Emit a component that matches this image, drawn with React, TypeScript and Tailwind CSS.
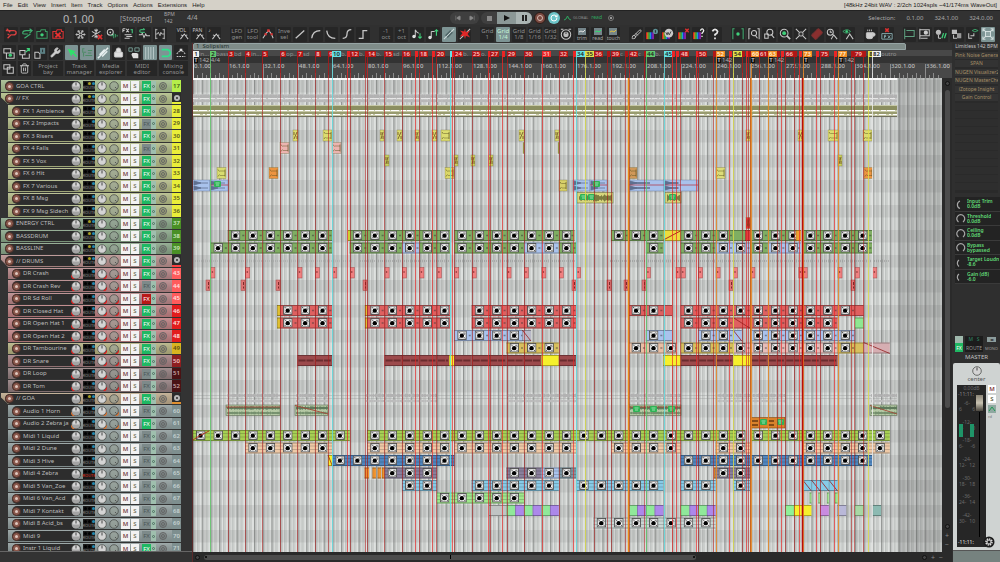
import React from "react";
import { Snowflake, Wrench, Lock, Trash2, Coffee, Bandage, Brush, SkipBack, SkipForward, RotateCw } from "lucide-react";

const U = 17.42;
const X0 = 193;
const ux = (u: number) => X0 + u * U;
const rowY = (r: number) => 80 + r * 12.5;

/* ---------- toolbar glyphs ---------- */
const stroke = { fill: "none", stroke: "currentColor", strokeWidth: 1.2 } as const;
const G = ({ children, c = "text-[#c6c6c6]" }: { children: React.ReactNode; c?: string }) => (
  <svg viewBox="0 0 14 14" className={`h-[12px] w-[12px] ${c}`}>{children}</svg>
);
const Txt = ({ a, b, on }: { a: string; b: string; on?: boolean }) => (
  <span className={`flex flex-col text-[6px] leading-[6px] ${on ? "text-[#c4f4d8]" : "text-[#8e8e8e]"}`}>
    <span>{a}</span><span>{b}</span>
  </span>
);
const LI = "h-[11px] w-[11px] text-[#c6c6c6]";
const Env = ({ label }: { label: string }) => (
  <span className="relative flex h-full w-full items-center justify-end">
    <span className="absolute left-px top-px text-[5px] leading-[5px] text-[#c8c8c8]">{label}</span>
    <G><path d="M4 13l4.500-6L13 13M7 9l-2.500-1M9.500 9L12 8" {...stroke} /></G>
  </span>
);
const Folder = ({ del }: { del?: boolean }) => (
  <G c={del ? "text-[#d33]" : "text-[#3c9a62]"}>
    <path d="M1 4h4l1-2h5v2h2v8H1z" {...stroke} />
    {del ? <path d="M4 5.500l6 5.500M10 5.500L4 11" stroke="#f03030" strokeWidth="2" /> : <circle cx="7" cy="8" r="2" fill="#3fd07a" />}
  </G>
);
const Rainbow = ({ x }: { x?: string }) => (
  <G>
    {["#e02020", "#e0a020", "#30c040", "#20a0d0", "#3030e0", "#b020d0"].map((c, i) => (
      <rect key={c} x={i * 1.5} y="5" width="1.5" height="8" fill={c} />
    ))}
    {!x && <><circle cx="11" cy="4" r="3" fill="#5c8f94" /><path d="M11 2.500v3" stroke="#222" /></>}
    {x === "x" && <path d="M8.500 1l4 4M12.500 1l-4 4" stroke="#e03030" strokeWidth="1.6" />}
    {x === "?" && <path d="M8.500 3q2.500-4 4 0q0 1.500-2 3v1M10.500 9v1.500" stroke="#f0f0f0" strokeWidth="1.500" fill="none" />}
    {x === "w" && <><circle cx="8" cy="6" r="5" fill="#c8c8c8" /><path d="M4.500 5l1.500 3 1-3 1.500 3 2-4" stroke="#333" fill="none" /></>}
  </G>
);
const Box = ({ label, c }: { label: string; c: string }) => (
  <span className="flex h-full w-full flex-col items-center text-[5px] leading-[5px] text-[#a8a8a8]">
    <svg viewBox="0 0 10 9" className="h-[9px] w-[10px]">
      <rect x="1" y="1" width="8" height="7" fill="#75858a" />
      <path d="M2 5l2-1 2 1 2-2" fill="none" stroke={c} />
    </svg>
    {label}
  </span>
);

type Btn = { n: string; on?: boolean; start?: boolean; g: React.ReactNode };
const TOP: Btn[] = [
  { n: "Undo", g: <G c="text-[#d84040]"><path d="M1 3h9q3 0 3 2.500T10 8H7L3 12M6 5L2 1M5 8l-2-1" {...stroke} strokeWidth="1.600" /></G> },
  { n: "Redo", g: <G c="text-[#3fae70]"><path d="M13 3H6Q2 3 2 6q0 1 2 1h4M10 1l3 2-3 3M4 12l7-5" {...stroke} strokeWidth="1.400" /></G> },
  { n: "Save snapshot", g: <Folder /> },
  { n: "Delete snapshot", g: <Folder del /> },
  { n: "Freeze", start: true, g: <Snowflake className={LI} /> },
  { n: "Unfreeze", g: <G><path d="M6 1v11M1 4l10 6M1 10l10-6M4 2l2 2 2-2M4 11l2-2 2 2" {...stroke} /><path d="M8 8l5 5M13 8l-5 5" stroke="#e03030" strokeWidth="1.800" /></G> },
  { n: "Audio settings", g: <G><circle cx="5" cy="5" r="3.500" {...stroke} /><circle cx="5" cy="5" r="1" fill="#ccc" /><path d="M5 9h4M9 6v6M11 7v4M13 8v2" stroke="#3fae70" /></G> },
  { n: "FX chain", g: <G><path d="M1 1v4M1 1h3M1 3h2M5 1l3 4M8 1L5 5M3 8h8M5 10h7M3 12h6" {...stroke} /><path d="M10 2h2v4" stroke="#3fae70" fill="none" strokeWidth="1.500" /></G> },
  { n: "Envelope tool", g: <G><path d="M1 8h3l1-2 2 5 2-4 1 2h4" {...stroke} /><path d="M8 5H4q-2 0-2-1.500T4 2h3M6 0.500L8 2" stroke="#3fae70" fill="none" strokeWidth="1.400" /></G> },
  { n: "Grid wave", g: <G><path d="M2 1v12M12 1v12M2 2h2M10 2h2M2 12h2M10 12h2M2 7h2l1-2 2 4 1-4 1 2h3" {...stroke} strokeWidth="1" /></G> },
  { n: "Volume envelope", start: true, g: <Env label="VOL" /> },
  { n: "Pan envelope", g: <Env label="PAN" /> },
  { n: "Pitch envelope", g: <Env label="♪" /> },
  { n: "LFO generator", start: true, g: <Txt a="LFO" b="gen" /> },
  { n: "LFO tool", g: <Txt a="LFO" b="tool" /> },
  { n: "Peak", g: <G><path d="M1 12l4-6 3-3 3 4 2 5" {...stroke} /><rect x="6" y="1.500" width="3" height="3" fill="#d33" /><rect x="3" y="6" width="2.500" height="2.500" fill="#d33" /><rect x="10" y="6" width="2.500" height="2.500" fill="#d33" /></G> },
  { n: "Invert selection", g: <Txt a="Inve" b="sel" /> },
  { n: "Linear", g: <G><path d="M2 12L12 3" {...stroke} strokeWidth="1.500" /></G> },
  { n: "Slow start", g: <G><path d="M2 12q1-9 10-9" {...stroke} strokeWidth="1.500" /></G> },
  { n: "Fast end", g: <G><path d="M2 3q1 9 10 9" {...stroke} strokeWidth="1.500" /></G> },
  { n: "S-curve", g: <G><path d="M2 12q5 0 5-5t5-5" {...stroke} strokeWidth="1.500" /></G> },
  { n: "Square", g: <G><path d="M2 12h5V3h5" {...stroke} strokeWidth="1.500" /></G> },
  { n: "Octave down", start: true, g: <Txt a="-1" b="oct" /> },
  { n: "Octave up", g: <Txt a="+1" b="oct" /> },
  { n: "Semitone down", g: <G><path d="M5 2v8M5 2q1 3 4 4" {...stroke} /><circle cx="3.500" cy="10" r="2" fill="#ddd" /><path d="M10.500 6v6M8.500 10l2 2 2-2" stroke="#3fd07a" fill="none" strokeWidth="1.300" /></G> },
  { n: "Semitone up", g: <G><path d="M5 4v7M5 4h4" {...stroke} /><circle cx="3.500" cy="11" r="2" fill="#ddd" /><path d="M11 9V2M9 4l2-2 2 2" stroke="#3fd07a" fill="none" strokeWidth="1.300" /></G> },
  { n: "Link", on: true, g: <G c="text-[#cfdada]"><path d="M1 13L13 1" {...stroke} /><path d="M3 9l6-6M5 11l6-6" {...stroke} stroke="#4c6264" strokeWidth="1.500" /></G> },
  { n: "Unlink", g: <G><path d="M1 13L13 1" {...stroke} /><path d="M7 1l1 4 5-2-3 4 3 4-5-2-1 4-1-4-5 1 3-4-3-3 5 1z" fill="#e02828" /></G> },
  { n: "Grid 1", start: true, g: <Txt a="Grid" b="1" /> },
  { n: "Grid 1/4", on: true, g: <Txt a="Grid" b="1/4" on /> },
  { n: "Grid 1/8", g: <Txt a="Grid" b="1/8" /> },
  { n: "Grid 1/16", g: <Txt a="Grid" b="1/16" /> },
  { n: "Grid 1/32", g: <Txt a="Grid" b="1/32" /> },
  { n: "Automation knob", g: <G><circle cx="7" cy="7.500" r="5.500" {...stroke} /><circle cx="7" cy="7.500" r="3" fill="#bbb" /><path d="M7 5v2" stroke="#222" /><path d="M1 1.500h3M10 1.500h3" {...stroke} /></G> },
  { n: "Trim", g: <Box label="trim" c="#e0e0e0" /> },
  { n: "Read", g: <Box label="read" c="#30e070" /> },
  { n: "Touch", g: <Box label="touch" c="#e0c040" /> },
  { n: "Paint", start: true, g: <Brush className={LI} /> },
  { n: "Colour by name", g: <Rainbow /> },
  { n: "Colour by wave", g: <Rainbow x="w" /> },
  { n: "Clear colours", g: <Rainbow x="x" /> },
  { n: "Random colours", g: <Rainbow x="?" /> },
  { n: "Help", g: <G c="text-[#e6e6e6]"><path d="M4 4q1-2.500 3-2.500T10 4q0 2-3 3.500V9M7 11v2" {...stroke} strokeWidth="2" /></G> },
  { n: "Zoom selection", start: true, g: <G c="text-[#3fae70]"><path d="M3 1H1v12M11 1h2v12" {...stroke} /><circle cx="7" cy="7" r="2" fill="#3fd07a" /></G> },
  { n: "Zoom time", g: <G><path d="M3 1H1v12M11 1h2v12M8.500 8.500L11 12" {...stroke} /><circle cx="7" cy="6" r="3" {...stroke} /></G> },
  { n: "Zoom items", g: <G><path d="M2 7h4v5H2zM9.500 7.500l3.500 4" {...stroke} /><circle cx="8" cy="5" r="3.500" {...stroke} /></G> },
  { n: "Zoom in", g: <G><circle cx="6" cy="6" r="4.500" {...stroke} /><circle cx="6" cy="6" r="2.200" fill="#3fd07a" /><path d="M9 9l4 4" {...stroke} strokeWidth="2" /></G> },
  { n: "Zoom out full", g: <G><path d="M1 1l12 12M13 1L1 13" {...stroke} /><circle cx="7" cy="7" r="2.500" fill="#333" stroke="#ccc" /></G> },
  { n: "Repair", g: <Bandage className="h-[12px] w-[12px] -rotate-45 text-[#7a3030]" fill="#8a2f2f" /> },
  { n: "Time view", g: <G><circle cx="5" cy="5" r="3.500" {...stroke} /><path d="M5 3v2h2M6 13l3-5 4 5" {...stroke} /></G> },
  { n: "Show envelopes", g: <G><path d="M1 4q5-4 9 0q-5 4-9 0z" stroke="#3fae70" fill="none" /><circle cx="5.500" cy="4" r="1.500" fill="#3fd07a" /><path d="M5 13l4-6 4 6" {...stroke} /></G> },
  { n: "Break", start: true, g: <Coffee className={LI} fill="#d0d0d0" /> },
  { n: "Bypass FX", g: <G><path d="M5 0.500l4 4M9 0.500l-4 4" stroke="#e03030" strokeWidth="1.800" /><path d="M1 6.500h12V13H1zM4 12V8.500h2M4 10h2M8 8.500l3 3.500M11 8.500L8 12" stroke="#8fb4b8" fill="none" /></G> },
  { n: "Dock", start: true, g: <G><path d="M2 1v12M4 3h9v7H2" {...stroke} stroke="#5fa080" /><path d="M4 5h8" stroke="#333" /></G> },
  { n: "Docked media", g: <G><path d="M1 1v12M1 2h11v7H1M2 12h8" {...stroke} /><circle cx="8" cy="5.500" r="2.500" fill="#ccc" /></G> },
  { n: "Plug-in on", g: <G><circle cx="4" cy="5" r="3" fill="#bbb" /><path d="M4 8v4M4 12h3" {...stroke} /><path d="M8 12l2-6M11 12l2-6" stroke="#3fd07a" strokeWidth="1.500" /></G> },
  { n: "Plug-in link", g: <G><rect x="1" y="2" width="6" height="5" fill="#bbb" /><rect x="7" y="6" width="5" height="6" fill="#999" /><path d="M3 8v4h4" {...stroke} /></G> },
  { n: "Routing view", g: <G><path d="M2 6v6h4M4 9h4V6" {...stroke} /><path d="M6 3q3-3 7 0q-4 3-7 0z" stroke="#3fae70" fill="none" /></G> },
  { n: "Full screen", on: true, g: <G c="text-[#cfdada]"><path d="M1 1l12 12M13 1L1 13M1 4V1h3M10 1h3v3M13 10v3h-3M4 13H1v-3" {...stroke} /><rect x="4" y="4" width="6" height="6" fill="#8fa4a4" stroke="#dfe8e8" /></G> },
];

const LEFT: Btn[] = [
  { n: "New from template", g: <G><path d="M1 2h8v5H1zM4 7v6h9V7H9" {...stroke} /><circle cx="8.500" cy="9.500" r="2" fill="#3fd07a" /></G> },
  { n: "Save template", g: <G><path d="M1 4h6v5H1zM4 9v4h8V8" {...stroke} /><path d="M8 6l4-4M9 2h3v3" stroke="#3fd07a" fill="none" strokeWidth="1.500" /></G> },
  { n: "Tabs", g: <G><path d="M1 6h4l2 2v5H1z" {...stroke} /><rect x="7" y="1" width="6" height="7" fill="#5c8084" /><path d="M10 3v3" stroke="#222" /></G> },
  { n: "Tools", g: <Wrench className={LI} fill="#d0d0d0" /> },
  { n: "Pointer", on: true, g: <G><path d="M2 2l4 9 1.500-3 4.500 4 1-1.500-4-4 2.500-1.500z" fill="#2fe06a" /></G> },
  { n: "Ripple edit", on: true, g: <G c="text-[#4d8a66]"><path d="M4 2H2v4h4M8 4h5M5 10h8M3 7v4M8 7h4" {...stroke} /></G> },
  { n: "Crossfade", on: true, g: <G c="text-[#e8f0f0]"><path d="M1 13L13 1M3 9l6-6M6 11l6-6" {...stroke} strokeWidth="1.700" /></G> },
  { n: "Lock", g: <Lock className={LI} fill="#e0e0e0" /> },
  { n: "Item grouping", g: <G><path d="M1 1h4v4H1zM8 1h5v4H8z" stroke="#7fa8a0" fill="none" /><path d="M5 7h5l2 1v5H6L4 9z" fill="#ddd" /></G> },
  { n: "Grid lines", on: true, g: <G c="text-[#b9c9c9]"><path d="M2 0v14M5 0v14M8 0v14M11 0v14" {...stroke} /></G> },
  { n: "Snap", on: true, g: <G c="text-[#2fe08a]"><path d="M2 3h6a4 4 0 010 8H2" {...stroke} strokeWidth="2" /></G> },
  { n: "Show points", g: <G><path d="M2 8l5-5 5 5M2 11h10" {...stroke} strokeDasharray="2 1" /><rect x="5.500" y="2" width="3" height="3" fill="#ddd" /></G> },
];

const ToolButton = ({ b }: { b: Btn }) => (
  <button
    aria-label={b.n}
    className={`flex h-[15px] min-w-0 flex-1 items-center justify-center overflow-hidden rounded-[1px] ${b.on ? "bg-[#7d9494]" : "bg-[#262626]"} ${b.start ? "ml-[7px]" : ""}`}
  >
    {b.g}
  </button>
);

/* ---------- tracks ---------- */
type Track = { n: string; num: string; bg: string; nc: string; top?: boolean; folder?: boolean; fx?: string; tick?: string };
const GRN = "bg-[#1fb863] text-white", OFF = "bg-[#7d8a8a] text-[#4a5555]", RED = "bg-[#b81818] text-white";
const YB = "bg-[#b0b884]", YN = "bg-[#e9ee3a] text-[#55551a]", DB = "bg-[#b38385]", AB = "bg-[#8d9a9a]", AN = "bg-[#7e8f8f] text-[#c5d2d2]";
const FOLD = "bg-[#2b2b2b] border-b-2";
const TRACKS: Track[] = [
  { n: "GOA CTRL", num: "17", bg: "bg-[#a1b889]", nc: "bg-[#b5ee4a] text-[#3c5a14]", top: true, fx: GRN },
  { n: "// FX", num: "", bg: "bg-[#aebb84]", nc: `${FOLD} border-[#e9ee3a]`, top: true, folder: true, fx: GRN },
  { n: "FX 1 Ambience", num: "28", bg: YB, nc: YN, fx: GRN },
  { n: "FX 2 Impacts", num: "29", bg: YB, nc: YN },
  { n: "FX 3 Risers", num: "30", bg: YB, nc: YN, fx: GRN },
  { n: "FX 4 Falls", num: "31", bg: YB, nc: YN },
  { n: "FX 5 Vox", num: "32", bg: YB, nc: YN, fx: GRN },
  { n: "FX 6 Hit", num: "33", bg: YB, nc: YN, fx: GRN },
  { n: "FX 7 Various", num: "34", bg: YB, nc: YN, fx: GRN },
  { n: "FX 8 Msg", num: "35", bg: YB, nc: YN, fx: GRN },
  { n: "FX 9 Msg Sidech", num: "36", bg: YB, nc: YN, fx: GRN },
  { n: "ENERGY CTRL", num: "37", bg: "bg-[#86a285]", nc: "bg-[#4a9026] text-[#cfe8c0]", top: true, fx: GRN },
  { n: "BASSDRUM", num: "38", bg: "bg-[#86a285]", nc: "bg-[#4a9026] text-[#cfe8c0]", top: true, fx: GRN },
  { n: "BASSLINE", num: "39", bg: "bg-[#86a285]", nc: "bg-[#4a9026] text-[#cfe8c0]", top: true, fx: GRN },
  { n: "// DRUMS", num: "", bg: "bg-[#b48c8a]", nc: `${FOLD} border-[#ff4040]`, top: true, folder: true, fx: GRN },
  { n: "DR Crash", num: "43", bg: DB, nc: "bg-[#ff5c5c] text-[#ffe0e0]", fx: GRN, tick: "#e02020" },
  { n: "DR Crash Rev", num: "44", bg: DB, nc: "bg-[#ff5c5c] text-[#ffe0e0]", tick: "#e02020" },
  { n: "DR Sd Roll", num: "45", bg: DB, nc: "bg-[#ff5c5c] text-[#ffe0e0]", fx: RED, tick: "#e02020" },
  { n: "DR Closed Hat", num: "46", bg: "bg-[#ba7d7f]", nc: "bg-[#e21d1d] text-[#ffe0e0]", fx: GRN, tick: "#e02020" },
  { n: "DR Open Hat 1", num: "47", bg: "bg-[#ba7d7f]", nc: "bg-[#e21d1d] text-[#ffe0e0]", fx: GRN, tick: "#e02020" },
  { n: "DR Open Hat 2", num: "48", bg: "bg-[#ba7d7f]", nc: "bg-[#e21d1d] text-[#ffe0e0]", fx: GRN, tick: "#e02020" },
  { n: "DR Tambourine", num: "49", bg: "bg-[#b1ae7e]", nc: "bg-[#d9b420] text-[#5a4a10]", fx: GRN, tick: "#e02020" },
  { n: "DR Snare", num: "50", bg: "bg-[#a07c7e]", nc: "bg-[#8e1e20] text-[#f0c8c8]", fx: GRN, tick: "#e02020" },
  { n: "DR Loop", num: "51", bg: "bg-[#8f7a7b]", nc: "bg-[#4a1214] text-[#c8a8a8]", tick: "#e02020" },
  { n: "DR Tom", num: "52", bg: "bg-[#8f7a7b]", nc: "bg-[#4a1214] text-[#c8a8a8]", tick: "#e02020" },
  { n: "// GOA", num: "", bg: "bg-[#baa688]", nc: `${FOLD} border-[#e09030]`, top: true, folder: true, fx: GRN },
  { n: "Audio 1 Horn", num: "60", bg: AB, nc: AN, tick: "#d87030" },
  { n: "Audio 2 Zebra ja", num: "61", bg: AB, nc: AN, fx: GRN, tick: "#d87030" },
  { n: "Midi 1 Liquid", num: "62", bg: AB, nc: AN },
  { n: "Midi 2 Dune", num: "63", bg: AB, nc: AN },
  { n: "Midi 3 Hive", num: "64", bg: AB, nc: AN },
  { n: "Midi 4 Zebra", num: "65", bg: AB, nc: AN },
  { n: "Midi 5 Van_Zoe", num: "66", bg: AB, nc: AN },
  { n: "Midi 6 Van_Acd", num: "67", bg: AB, nc: AN },
  { n: "Midi 7 Kontakt", num: "68", bg: AB, nc: AN },
  { n: "Midi 8 Acid_bs", num: "69", bg: AB, nc: AN },
  { n: "Midi 9", num: "70", bg: AB, nc: AN },
  { n: "Instr 1 Liquid", num: "71", bg: AB, nc: AN, fx: GRN },
];

const Knob = ({ light, tick, dim }: { light?: boolean; tick?: string; dim?: boolean }) => (
  <svg viewBox="0 0 10 10" className="h-[10px] w-[10px] shrink-0">
    {tick && <path d={light ? "M0.500 6q0 3 3 4" : "M9.500 6q0 3-3 4"} fill="none" stroke={tick} strokeWidth="1.500" />}
    <circle cx="5" cy="5" r="4.300" fill={dim ? "#9aa39a" : "#d4d4d4"} fillOpacity={dim ? 0.6 : 1} stroke="#4b4f4b" strokeWidth="0.800" />
    {light && <path d="M1 5.500a4 4 0 008 0z" fill="#a4a4a4" />}
    {dim ? <path d="M6 6l1.500 1.500" stroke="#555" /> : <path d="M5 1.500v3" stroke="#444" />}
  </svg>
);

const TrackRow = ({ t }: { t: Track }) => (
  <li className="flex h-[12px] odd:h-[13px]">
    <div className={`mb-px flex min-w-0 flex-1 items-center bg-linear-to-b from-white/15 to-black/10 ${t.bg} ${t.top ? "ml-px" : "ml-[8px]"} ${t.folder ? "[clip-path:polygon(0_0,100%_0,100%_100%,7px_100%,0_40%)]" : ""}`}>
      <div className="ml-[4px] flex h-[10px] min-w-0 flex-1 items-center rounded-l-full rounded-r-full bg-[#2d2d2d]">
        <button aria-label={`Arm ${t.n}`} className="h-[9px] w-[9px] shrink-0 rounded-full border border-[#4a2f28] bg-[#8a584c] p-[2px]">
          <span className="block h-[3px] w-[3px] rounded-full bg-[#e0c8c0]" />
        </button>
        <span className="ml-[2px] min-w-0 flex-1 overflow-hidden whitespace-nowrap text-[6px] leading-[9px] text-[#bcbcbc]">{t.n}</span>
        <Knob light tick={t.tick} />
      </div>
      <button className="ml-[2px] flex h-[10px] w-[12px] flex-col items-center justify-between bg-[#1b1b1b] py-px text-[4px] leading-[4px] text-[#8a8a8a]">
        <span className="flex gap-px">
          <i className="h-[3px] w-[3px] rounded-full bg-black" />
          <i className={`h-[3px] w-[3px] rounded-full ${t.top ? "bg-[#a8a020]" : "bg-black"}`} />
          <i className="h-[3px] w-[3px] rounded-full bg-[#2088b0]" />
        </span>
        <span className={t.num === "65" ? "text-[#e03020]" : ""}>ROUTE</span>
      </button>
      <span className="ml-[2px] flex gap-[2px]"><Knob tick={t.tick} /><Knob dim tick={t.tick} /></span>
      <span className="ml-[2px] flex gap-px text-[6px] font-semibold leading-[10px]">
        <button className="h-[10px] w-[9px] bg-[#f2f2f2] text-[#7a4a4a]">M</button>
        <button className="h-[10px] w-[8px] bg-[#f2f2f2] text-[#75755c]">S</button>
      </span>
      <button className={`ml-[3px] h-[10px] w-[9px] text-[6px] leading-[10px] ${t.fx ?? OFF}`}>FX</button>
      <button aria-label={`FX power ${t.n}`} className="flex h-[10px] w-[5px] items-center justify-center bg-[#9fbfae]">
        <i className="h-[3px] w-[3px] rounded-full border border-[#4c7060]" />
      </button>
      <span className="ml-[3px] mr-[5px] flex h-[8px] w-[8px] items-center justify-center rounded-full border border-[#666] bg-black/10">
        <i className="h-[4px] w-[4px] rounded-full border border-[#666]" />
      </span>
    </div>
    <span className={`mb-px flex w-[9px] items-center justify-center text-[6px] font-semibold ${t.nc}`}>
      {t.folder ? <i className="h-[6px] w-[6px] rounded-full border-2 border-[#b8b8b8]" /> : t.num}
    </span>
    <span className="w-[11px] shrink-0" />
  </li>
);

/* ---------- markers ---------- */
const COL: Record<string, string> = { r: "#b01616", b: "#ec2424", g: "#62c86c", c: "#62e0e4", y: "#dfe04a", o: "#f08a20", w: "#f0f0f0" };
const MARKERS: [number, string, string, string?][] = [
  [193, "1", "w", "in..."], [210, "2", "g", "bass"], [228, "3", "r", "bd"], [245, "4", "r", "in..."], [262, "5", "r"], [280, "6", "r", "op.."],
  [297, "7", "r", "sd"], [315, "8", "r"], [328, "9", "r"], [332, "10", "c", "b."], [347, "", "b"], [350, "12", "r", "b."], [365, "", "r"], [367, "14", "r", "b."],
  [384, "15", "r", "sd"], [402, "16", "r"], [415, "", "b"], [419, "18", "r"], [432, "", "b"], [436, "20", "r"], [450, "", "c"], [452, "", "b"], [454, "24", "r", "b."],
  [472, "25", "r", "o."], [488, "", "b"], [490, "27", "r"], [502, "", "b"], [507, "29", "r"], [524, "30", "r"], [542, "31", "b"], [559, "32", "r"],
  [573, "", "b"], [576, "34", "c"], [585, "35", "y"], [594, "36", "r"], [607, "", "r"], [611, "39", "r", "c"], [625, "", "r"], [629, "42", "r", "c"],
  [644, "", "r"], [646, "44", "g", "b."], [664, "45", "c"], [672, "", "b"], [676, "", "b"], [680, "48", "r"], [696, "", "b"], [698, "50", "r"], [713, "", "r"], [716, "52", "o"],
  [729, "", "b"], [733, "54", "y"], [742, "", "r"], [746, "", "b"], [748, "", "r"], [751, "60", "o"], [759, "61", "r"], [768, "63", "o"], [777, "", "r"], [781, "", "b"],
  [785, "66", "r"], [794, "", "r"], [799, "", "b"], [803, "73", "o"], [816, "", "b"], [820, "75", "r"], [834, "", "b"], [838, "77", "o"],
  [851, "", "r"], [854, "79", "r"], [863, "", "r"], [868, "8", "y"], [872, "82", "w", "outro"],
];
const TEMPO: [number, string][] = [[193, "142 4/4"], [716, "142"], [750, ""], [768, "142"], [803, ""], [838, "142"]];

/* ---------- clips: row, start, end (in 8-bar steps), colour, decoration ---------- */
type Clip = [number, number, number, string, number?];
const GR = "#7fae62", BL = "#a9c2ec", RD = "#df6060", LM = "#a6d052", PC = "#efc9a6", DBL = "#4f86c0", PU = "#8a7f9c", SB = "#86cbe8", LG = "#9fe88c", SN = "#9c4a4c", TG = "#d8bf5c", PK = "#e6bcb8", YE = "#f6f02c", LT = "#c9d6d4";
const seq = (r: number, a: number, b: number, c: string, icon = 1): Clip[] => {
  const out: Clip[] = [];
  for (let u = a; u < b; u++) {
    const e = Math.min(u + 1, b);
    out.push([r, u, e, c, e - u < 0.6 && icon !== 3 ? 0 : icon]);
  }
  return out;
};
const CLIPS: Clip[] = [
  ...seq(12, 2, 8, GR), [12, 8.9, 9.03, YE], ...seq(12, 9, 14.75, GR), ...seq(12, 15, 21.9, GR), ...seq(12, 24, 27, GR), [12, 27, 28, "#ecdc3c"], ...seq(12, 28, 31, GR), [12, 31, 31.75, GR], [12, 31.7, 32, "#e04040"], ...seq(12, 32, 34.8, GR), [12, 34.6, 34.9, "#f0a030"], ...seq(12, 35, 39, GR),
  ...seq(13, 1, 8, GR), ...seq(13, 9, 12, GR), [13, 12, 13, BL, 1], ...seq(13, 13, 14.75, GR), ...seq(13, 15, 19, GR), ...seq(13, 19, 21, BL), [13, 21, 22, GR, 1], [13, 26, 27, GR, 1], ...seq(13, 28, 30, GR), ...seq(13, 30, 32, BL), [13, 32, 33, GR, 1], ...seq(13, 33, 34.9, BL), ...seq(13, 35, 39, GR),
  [18, 4.83, 5, "#e0c030"], ...seq(18, 5, 8, RD), [18, 9.87, 10, "#e0c030"], ...seq(18, 10, 14.75, RD), ...seq(18, 16, 22, RD), ...seq(18, 25, 27.5, RD), ...seq(18, 28, 38.5, RD),
  [19, 4.83, 5, "#e0c030"], ...seq(19, 5, 8, RD), [19, 9.87, 10, "#e0c030"], ...seq(19, 10, 14.75, RD), ...seq(19, 16, 22, RD), ...seq(19, 28, 31, RD), [19, 31, 32, RD, 2], ...seq(19, 32, 37, RD), [19, 38, 38.5, "#8fe890"],
  ...seq(20, 15, 19, BL), [20, 18.9, 19.4, "#b8b8c8", 2], ...seq(20, 26, 27.5, BL), ...seq(20, 29, 31, BL), [20, 31, 31.5, BL, 2], ...seq(20, 32, 38, BL),
  ...seq(21, 18, 21, TG), ...seq(21, 25, 27.8, "#e8bfa4"), ...seq(21, 28, 31, TG), ...seq(21, 31, 37, PK), [21, 37, 38, TG, 1], [21, 38, 38.5, TG], [21, 38.5, 40, "#d6aeb2", 2],
  ...seq(22, 6, 8, SN, 3), ...seq(22, 11, 14.7, SN, 3), [22, 14.7, 15, YE], ...seq(22, 15, 20, SN, 3), [22, 20, 21, YE], [22, 21, 22, SN, 3], [22, 27, 28, YE], ...seq(22, 28, 31, SN, 3), [22, 31, 32, YE], ...seq(22, 32, 37, SN, 3),
  ...seq(28, 0, 9, LM, 4), ...seq(28, 10, 31, LM, 4), [28, 31, 31.7, LM, 4], ...seq(28, 32, 40, LM, 4),
  ...seq(29, 3, 8, PC, 4), ...seq(29, 10, 14.75, PC, 4), ...seq(29, 15, 22, PC, 4), ...seq(29, 24, 28, PC, 4), ...seq(29, 30, 32, PC, 4), ...seq(29, 35, 40, PC, 4),
  [30, 7.75, 8, YE, 2], ...seq(30, 8, 15, DBL, 4), ...seq(30, 28, 39, DBL, 4),
  [31, 9.85, 10.1, "#f0922c"], [31, 10.3, 10.5, "#f0922c"], [31, 10.6, 10.8, "#f0922c"], [31, 10.85, 11, "#f0922c"], ...seq(31, 11, 14, PU, 4), ...seq(31, 18, 20, PU, 4), [31, 20, 21, BL, 4], [31, 21, 22, "#7d97a4", 4], [31, 29.9, 30, "#f0922c"], ...seq(31, 30, 32, PU, 4),
  ...seq(32, 12, 14, SB, 4), ...seq(32, 16, 21, SB, 4), ...seq(32, 22, 27, SB, 4), ...seq(32, 28, 30, SB, 4), [32, 31, 32, SB, 4], [32, 35, 35.5, SB, 2], [32, 35.5, 36, SB, 2], [32, 36, 36.5, SB, 2], [32, 36.5, 37, SB, 2],
  ...seq(33, 14, 19, LG, 4), [33, 35.4, 35.5, LG], [33, 35.9, 36, LG], [33, 36.4, 36.5, LG], [33, 36.85, 37, LG],
  [34, 17, 18, "#c0c4c4"],
  ...[18, 19, 20, 25, 26, 28, 29].flatMap((u): Clip[] => [[34, u, u + 0.5, "#90e89a"], [34, u + 0.5, u + 1, "#ac88ea"]]),
  [34, 34, 34.5, "#90f098"], [34, 34.5, 35.5, YE], [34, 36, 36.5, "#c98be0"], [34, 37, 37.5, "#b9b8d8"], [34, 38, 38.5, "#a8d8a4"], [34, 39, 39.5, "#8cbab2"],
  ...seq(35, 23, 30, LT, 4),
];
type Small = [number, number, number, string];
const RISERS: [number, number][] = [[293, 298], [323, 332], [380, 384], [397, 402], [415, 419], [432, 437], [441, 450], [519, 524], [555, 559], [746, 750], [798, 803], [828, 838], [863, 872]];
const SMALL: Small[] = [
  ...RISERS.map(([a, b]): Small => [4, a, b, "#dcdc70"]),
  [5, 280, 289, "#ecb4b0"], [5, 332, 341, "#ecb4b0"], [5, 523, 524, "#a8a850"], [5, 558, 559, "#a8a850"],
  ...[385, 454, 471, 489, 838].map((a): Small => [6, a, a + 4, "#c8d060"]),
  [7, 217, 226, "#d8dc70"], [7, 269, 278, "#ec9440"], [7, 445, 454, "#dcd868"], [7, 629, 637, "#d09858"], [7, 716, 725, "#dcdc78"], [7, 864, 873, "#ee9440"],
  [8, 559, 567, "#d8d068"],
  [11, 746, 750, "#e03434"],
];
const CRASH = [1, 3, 6, 7, 8, 9, 11, 12, 13, 14, 15, 16, 18, 19, 20, 21, 22, 26, 27.7, 28, 29, 30, 31, 32, 34.75, 35, 37, 38, 39];
const CRREV = [206, 241, 276, 363, 572, 607, 624, 642, 729, 851];

/* deterministic noise for the audio peaks */
const nz = (i: number) => { const v = Math.sin(i * 12.9898) * 43758.5453; return v - Math.floor(v); };
const Wave = ({ a, b, y, h, c, s = 1, o = 1 }: { a: number; b: number; y: number; h: number; c: string; s?: number; o?: number }) => {
  let d = "";
  for (let x = a; x < b; x += s) { const k = (h / 2) * (0.45 + 0.55 * nz(x + y)); d += `M${x + 0.5} ${y - k}V${y + k}`; }
  return <path d={d} stroke={c} strokeWidth="1" opacity={o} />;
};
const Badge = ({ x, y, w = 7 }: { x: number; y: number; w?: number }) => (
  <g><rect x={x} y={y} width={w} height="6" rx="1" fill="#2fb456" /><path d={`M${x + 1.5} ${y + 2}h${w - 3}M${x + 2} ${y + 4}h${w - 4}`} stroke="#b4ecc2" strokeWidth="0.800" fill="none" /></g>
);

const Arrange = () => (
  <svg viewBox="193 78 749 474" preserveAspectRatio="none" className="block h-full w-full" aria-label="Arrangement">
    <defs>
      <pattern id="bars" x={X0} y="0" width={U / 2} height="20" patternUnits="userSpaceOnUse">
        <rect width="0.9" height="20" fill="#858987" />
        <rect x="0.9" width="1.700" height="20" fill="#bdc0be" />
        <rect x="4.35" width="0.800" height="20" fill="#a0a3a1" />
        <rect x="5.150" width="1.6" height="20" fill="#cacdcb" />
      </pattern>
      <symbol id="take" viewBox="0 0 10 10">
        <rect x="0.500" y="0.500" width="9" height="9" fill="#d4d4d4" stroke="#4a4a4a" strokeWidth="0.900" />
        <path d="M2 4l3-2.500L8.300 3 8 7.500 5 8.500 2 7.500z" fill="#fff" />
        <circle cx="4.800" cy="5.400" r="2.300" fill="#000" />
        <circle cx="7" cy="3.500" r="1" fill="#fff" stroke="#222" strokeWidth="0.600" />
        <path d="M1.500 8.500l1.500-1.500M8.500 8.500L7 7M1.500 1.500L3 3" stroke="#333" strokeWidth="0.800" />
      </symbol>
    </defs>
    <rect x="193" y="78" width="749" height="474" fill="#dee1df" />
    <rect x="193" y="78" width="749" height="474" fill="url(#bars)" />
    {TRACKS.map((_, i) => i % 2 === 0 && <rect key={i} x="193" y={rowY(i)} width="749" height="12.500" fill="#70706f" opacity="0.130" />)}
    <rect x="897.500" y="78" width="44.500" height="474" fill="#505050" opacity="0.220" />
    <rect x="193" y="78" width="704" height="2" fill="#fafafa" />

    <rect x="193" y="94" width="704" height="8" fill="#c0c0c0" opacity="0.700" />
    <Wave a={193} b={897} y={96.5} h={4} c="#b2b2b2" /><Wave a={193} b={897} y={101} h={3} c="#b8b8b8" />
    <path d="M193 98.500h704" stroke="#e6e6e6" strokeDasharray="5 2 9 1" />
    <rect x="193" y="105" width="704" height="12" fill="#c6c8a6" />
    <rect x="193" y="106" width="704" height="4" fill="#8b8e60" />
    <rect x="193" y="112" width="704" height="2" fill="#999c70" />
    <path d="M193 110.500h704" stroke="#fff" strokeDasharray="5 1 8 2" />
    <path d="M193 114.500h704" stroke="#fff" strokeDasharray="7 3 2 2" />
    <path d="M193 116.500h704" stroke="#6f6f5c" />
    {[[193, 352, 0.35], [360, 576, 0.6], [610, 890, 0.6]].map(([a, b, o]) => <Wave key={a} a={a} b={b} y={261} h={3} c="#888" s={2} o={o * 0.8} />)}
    <path d="M193 395.500h704M193 398.500h704" stroke="#8a8a8a" strokeWidth="0.500" opacity="0.6" />
    {[[227, 280], [296, 328], [366, 437], [507, 576], [629, 681], [715, 785], [871, 897]].map(([a, b]) => <g key={a}><Wave a={a} b={b} y={395.5} h={4} c="#b2b2b2" /><Wave a={a} b={b} y={401} h={3} c="#bcbcbc" /></g>)}

    {CLIPS.map(([r, a, b, c, k], i) => {
      const x = ux(a), w = (b - a) * U, y = rowY(r);
      return (
        <g key={i}>
          <rect x={x} y={y} width={w} height="11" fill={c} />
          <path d={`M${x} ${y + 0.5}h${w}M${x} ${y + 10.5}h${w}`} stroke="#000" strokeOpacity="0.300" />
          <path d={`M${x + 0.3} ${y}v11`} stroke="#000" strokeOpacity="0.300" strokeWidth="0.600" />
          {k === 1 && <path d={`M${x + w - 3} ${y + 5.5}h2`} stroke="#333" strokeOpacity="0.500" strokeWidth="1.500" />}
          {k === 4 && <path d={`M${x} ${y + 3.5}h${w}M${x} ${y + 7}h${w}`} stroke="#222" strokeOpacity="0.300" strokeWidth="0.700" />}
          {k === 3 && <path d={`M${x + 1} ${y + 5.5}h${w - 2}`} stroke="#6a2c2e" strokeWidth="2" strokeDasharray="7 1" />}
          {k === 2 && <path d={`M${x} ${y}l${w} 11`} stroke="#902020" strokeWidth="0.800" />}
          {(k === 1 || k === 4) && <use href="#take" x={x + 3} y={y + 0.5} width="9.500" height="9.500" />}
        </g>
      );
    })}
    <path d={`M${ux(27)} 240l17-9M193 440l6-4 10-5`} stroke="#b03020" fill="none" />
    {SMALL.map(([r, a, b, c], i) => {
      const y = rowY(r), w = b - a;
      return (
        <g key={i}>
          <rect x={a} y={y} width={w} height="11" fill={c} stroke="#66602a" strokeOpacity="0.500" strokeWidth="0.600" />
          {w > 6 ? (
            <g stroke="#5c5424" strokeWidth="0.800">
              <path d={`M${a + 3} ${y + 3.5}h${w - 4}M${a + 3} ${y + 8}h${w - 4}`} strokeOpacity="0.600" />
              <path d={`M${a + 1} ${y + 2}l1.500 2M${a + 1} ${y + 9}l1.500-2M${a + w - 1} ${y + 2}v7`} strokeOpacity="0.800" />
            </g>
          ) : w > 3 && <path d={`M${a + 1} ${y + 9}l${w - 2}-7M${a + 1} ${y + 2}v3M${a + w - 1} ${y + 6}v3`} stroke="#6a4a20" strokeWidth="0.800" />}
        </g>
      );
    })}
    {CRASH.map((u) => <g key={u}><rect x={ux(u) + 0.5} y={rowY(15)} width="4" height="10.500" fill="#f08080" stroke="#a04444" strokeWidth="0.500" /><circle cx={ux(u) + 2} cy={rowY(15) + 4.5} r="0.800" fill="#7a2c2c" /></g>)}
    {CRREV.map((x) => <g key={x}><rect x={x} y={rowY(16)} width="4" height="10.500" fill="#e07474" stroke="#a04444" strokeWidth="0.500" /><path d={`M${x + 2.5} ${rowY(16) + 2}v3M${x + 2.5} ${rowY(16) + 6.5}v2`} stroke="#7a2c2c" /></g>)}

    {[[193, 210], [210, 228], [573, 590], [590, 607], [629, 664], [664, 698]].map(([a, b], i) => (
      <g key={a}>
        <rect x={a} y="180" width={b - a} height="11" fill="#a9c2ec" stroke="#5c6c8c" strokeOpacity="0.600" strokeWidth="0.600" />
        <path d={`M${a + 1} 181l7 2-7 2zM${a + 1} 186l7 2-7 2zM${a + 1} 183h14M${a + 1} 188h14`} fill="#5f6f8f" stroke="#5f6f8f" strokeWidth="0.800" />
        {(i === 1 || i > 2) && <path d={`M${a} 185h${b - a}`} stroke="#b04050" strokeWidth="0.800" />}
      </g>
    ))}
    <path d="M632 183h18M632 188h18M668 183h10M668 188h10" stroke="#5f6f8f" strokeWidth="1.500" />
    <Badge x={214} y={181} /><Badge x={593} y={181} />
    {[[577, 613], [665, 681]].map(([a, b]) => <g key={a}><rect x={a} y="192.500" width={b - a} height="10.500" fill="#d6d67c" stroke="#707040" strokeWidth="0.600" /><Wave a={a + 2} b={b - 1} y={198} h={7} c="#7c7c40" /></g>)}
    <Badge x={580} y={194} /><Badge x={588} y={194} /><Badge x={669} y={194} />
    {[[226, 280], [295, 328], [629, 681], [870, 897]].map(([a, b], i) => (
      <g key={a}>
        <rect x={a} y="405" width={b - a} height="10.500" fill="#b4c8a4" stroke="#5c6c54" strokeWidth="0.600" />
        <Wave a={a + 1} b={b} y={408} h={3.5} c="#5f7a5c" /><Wave a={a + 1} b={b} y={413} h={3} c="#75906e" />
        <path d={i % 2 ? `M${a} 405.500L${b} 414` : `M${a} 407h${b - a}`} stroke="#a04838" strokeWidth="0.900" />
      </g>
    ))}
    <Badge x={633} y={406} /><Badge x={650} y={406} /><Badge x={668} y={406} />
    <rect x="751" y="417.500" width="34" height="10.500" fill="#d8822c" stroke="#804810" strokeWidth="0.600" />
    <path d="M752 421h6M752 425h6M768 421h6M768 425h6M777 423h4" stroke="#6a3a10" strokeWidth="1.500" />
    <Badge x={760} y={419} /><Badge x={777} y={419} />

    {MARKERS.map(([x, , c]) => x > 193 && (
      <path key={x} d={`M${x + 0.5} 78V552`} stroke={COL[c]} strokeWidth="1" opacity={c === "r" ? 0.55 : c === "b" ? 0.65 : 0.8} />
    ))}
    <path d="M628.500 78V552" stroke="#e88a18" strokeWidth="1.500" />
    <path d="M750.500 78V552" stroke="#c86820" />
    <path d="M802.500 78V552" stroke="#b80c0c" strokeWidth="1.500" />
  </svg>
);

const Ruler = () => (
  <div className="relative h-[35px] shrink-0 overflow-hidden bg-[#333]">
    <div className="flex h-[7px] w-[94%] items-center rounded-t-[2px] border border-[#96a4a4] bg-[#7f8c89] pl-[2px] text-[6px] text-[#22302e]">1&nbsp; Solipsism</div>
    <div className="h-[6px] bg-[#484848]" />
    <div className="h-[7px] bg-[#333]" />
    <div className="h-[15px] bg-[#484848]" />
    {Array.from({ length: 172 }, (_, i) => (
      <i key={i} className={`absolute bottom-0 w-px bg-[#8c8c8c] ${i % 8 === 0 ? "h-[14px]" : i % 2 ? "h-[3px]" : "h-[5px]"}`} style={{ left: Math.round((i * U) / 4) }} />
    ))}
    {Array.from({ length: 22 }, (_, i) => (
      <span key={i} className="absolute top-[19px] whitespace-nowrap text-[6px] font-medium leading-[9px] text-[#bcbcbc]" style={{ left: Math.round(i * 2 * U) + 1 }}>{i * 16}.1.00</span>
    ))}
    {MARKERS.map(([x, n, c, t]) => (
      <span key={x} className="absolute top-[8px] flex whitespace-nowrap text-[6px] leading-[6px]" style={{ left: x - X0 }}>
        <b className={`h-[6px] text-center font-semibold ${n.length > 1 ? "w-[9px]" : n ? "w-[6px]" : "w-[3px]"}`} style={{ background: COL[c], color: "rb".includes(c) ? "#ffc4c4" : c === "o" ? "#fff0d8" : "#222" }}>{n}</b>
        {t && <span className="text-[#909090]">{t}</span>}
        <i className="absolute left-0 top-[6px] h-[21px] w-px opacity-80" style={{ background: COL[c] }} />
      </span>
    ))}
    {TEMPO.map(([x, t]) => (
      <span key={x} className="absolute top-[14px] flex text-[6px] leading-[6px] text-[#b0b0b0]" style={{ left: x - X0 + 1 }}>
        <b className="mr-px w-[4px] bg-[#111] text-center font-semibold text-[#d0d0d0]">T</b>{t}
      </span>
    ))}
  </div>
);

const FXS = ["Limitless 142 BPM", "Pink Noise Genera", "SPAN", "NUGEN Visualizer2", "NUGEN MasterChe", "iZotope Insight", "Gain Control"];
const PARAMS: [string, string, string][] = [
  ["Input Trim", "0.0dB", "M5 9.500A4 4 0 015 2"], ["Threshold", "0.0dB", "M3.500 9A4 4 0 118 9"], ["Ceiling", "0.0dB", "M3.500 9A4 4 0 118 9"],
  ["Bypass", "bypassed", "M3.500 9A4 4 0 118 9"], ["Target Loudn", "-8.6", "M4 9.500A4 4 0 014 3"], ["Gain (dB)", "-6.0", "M4 9.500A4 4 0 014 3"],
];
const SCALE: [string, string, string][] = [["-6-", "6", "6"], ["-12-", "0-", "-0"], ["-18-", "6-", "-6"], ["-24-", "12-", "12"], ["-30-", "18-", "18"], ["-36-", "24-", "14"], ["-42-", "30-", "10"]];

const Master = () => (
  <aside className="flex w-[48px] shrink-0 flex-col bg-[#2f2f2f] pl-px">
    <ul className="mx-[2px] flex h-[150px] shrink-0 flex-col gap-px overflow-hidden bg-[#2a2a2a]">
      {FXS.map((f, i) => (
        <li key={f} className={`h-[7px] shrink-0 overflow-hidden whitespace-nowrap bg-[#333] text-center text-[5px] leading-[7px] odd:mb-px ${i ? "text-[#a58e66]" : "text-[#c4c4c4]"}`}>{f}</li>
      ))}
      {Array.from({ length: 11 }, (_, i) => <li key={i} className="h-[7px] shrink-0 bg-[#2e2e2e]" />)}
    </ul>
    <ul className="ml-[2px] mt-[4px] flex h-[139px] shrink-0 flex-col">
      {PARAMS.map(([a, b, d]) => (
        <li key={a} className="flex h-[14px] items-center gap-px border-b border-[#3a3a3a] bg-[#232323] odd:h-[15px]">
          <svg viewBox="0 0 11 11" className="h-[11px] w-[11px] shrink-0"><path d={d} fill="none" stroke="#a8a8a8" strokeWidth="1.200" /></svg>
          <span className="overflow-hidden whitespace-nowrap text-[5px] font-semibold leading-[5px] text-[#62dc78]">{a}<br />{b}</span>
        </li>
      ))}
    </ul>
    <div className="mx-[2px] flex h-[16px] shrink-0 items-stretch gap-[2px] text-[4px] leading-[5px]">
      <button className="flex w-[8px] flex-col items-center justify-between bg-[#1fb863] pb-px text-[5px] text-white"><i className="h-[7px] w-full bg-[#9fb8ac]" />FX</button>
      <button className="flex w-[18px] flex-col items-center justify-between bg-[#1c1c1c] py-px text-[5px] text-[#999]"><span className="text-[#2f8a68]">M &nbsp; S</span>ROUTE</button>
      <button className="flex flex-1 flex-col items-center justify-between py-px text-[#999]"><span className="w-[9px] bg-[#8c9c9c] text-[#222]">◂▸</span>MONO</button>
    </div>
    <div className="h-[11px] shrink-0 text-center text-[6px] leading-[11px] text-[#c0c0c0]">MASTER</div>
    <section className="flex min-h-0 flex-1 flex-col items-center rounded-t-[2px] bg-[#cfd3d2] pt-[3px]">
      <Knob />
      <span className="text-[6px] leading-[7px] text-[#555]">center</span>
      <div className="flex min-h-0 w-full flex-1 gap-[2px] pl-[4px] pr-[2px] pt-[2px]">
        <div className="relative flex w-[29px] flex-col bg-[#262626] text-[5px] leading-[6px] text-[#6c6c6c]">
          <span className="text-center">0.00dB</span>
          <span className="pl-px text-[#8a8a8a]">-11:11:</span>
          <div className="flex flex-1 flex-col justify-around pb-[12px] pl-[2px]">
            {SCALE.map(([s, l, r]) => (
              <span key={s} className="flex w-[16px] flex-col items-center">{s}<span className="flex w-full justify-between"><span>{l}</span><span>{r}</span></span></span>
            ))}
          </div>
          <span className="pb-[2px] pl-px text-[#e4e4e4]">-11:11:</span>
          <i className="absolute left-[2px] top-[39px] h-[13px] w-[4px] bg-[#1f9468]" />
          <i className="absolute left-[13px] top-[39px] h-[13px] w-[4px] bg-[#1f9468]" />
          <i className="absolute bottom-[10px] left-[22px] top-[10px] w-px bg-black" />
          <button aria-label="Master volume" className="absolute left-[19px] top-[10px] h-[17px] w-[7px] border-b border-[#222] bg-linear-to-b from-[#8c8678] via-[#c8c2b2] to-[#4c4840]" />
          <svg viewBox="0 0 12 12" className="absolute -bottom-px left-[26px] h-[12px] w-[12px]"><circle cx="6" cy="6" r="5.500" fill="#1c1c1c" /><circle cx="6" cy="6" r="3" fill="none" stroke="#ddd" strokeWidth="1.500" strokeDasharray="1.500 0.800" /><circle cx="6" cy="6" r="2" fill="none" stroke="#ddd" /></svg>
        </div>
        <div className="flex flex-col gap-[2px] text-[6px] font-semibold leading-[8px]">
          <button className="h-[8px] w-[8px] bg-white text-[#803838]">M</button>
          <button className="h-[8px] w-[8px] bg-white text-[#606040]">S</button>
          <button aria-label="Master automation" className="h-[8px] w-[8px] bg-[#8ea8a0]"><svg viewBox="0 0 8 8"><path d="M1 6l3-4 3 4" fill="none" stroke="#1f9a50" /></svg></button>
          <span className="text-[4px] font-normal leading-[3px] text-[#777]">rd</span>
        </div>
      </div>
      <div className="mt-[3px] h-[12px] w-full shrink-0 border-t border-[#555] bg-[#76827f]" />
    </section>
  </aside>
);

const MENU = ["File", "Edit", "View", "Insert", "Item", "Track", "Options", "Actions", "Extensions", "Help"];
const DOCKS = ["Project bay", "Track manager", "Media explorer", "MIDI editor", "Mixing console"];

export default function App() {
  return (
    <div className="flex h-screen min-h-[562px] flex-col overflow-hidden bg-[#333] font-['Noto_Sans',sans-serif] text-[#a8a8a8]">
      <nav className="flex h-[10px] shrink-0 items-center gap-[5px] bg-[#d5d1c8] px-[3px] font-['Liberation_Sans',sans-serif] text-[6px] leading-[9px] text-[#222]">
        {MENU.map((m) => <a key={m} href="#menu" className="whitespace-nowrap">{m}</a>)}
        <span className="ml-auto">[48kHz 24bit WAV : 2/2ch 1024spls ~41/174ms WaveOut]</span>
      </nav>

      <header className="flex h-[15px] shrink-0 items-center border-t border-[#222] bg-[#323232]">
        <div className="flex w-[45%] items-center">
          <span className="ml-[63px] w-[57px] text-[11px] leading-[13px] text-[#b8b8b8]">0.1.00</span>
          <span className="w-[44px] text-[7px] leading-[13px]">[Stopped]</span>
          <span className="flex w-[23px] flex-col text-[5px] leading-[7px]"><span>BPM</span><span>142</span></span>
          <span className="text-[7px]">4/4</span>
        </div>
        <div className="flex items-center text-[#888]">
          <span className="flex h-[12px] overflow-hidden rounded-full bg-[#3f3f3f]">
            <button aria-label="Go to start" className="flex w-[15px] items-center justify-center"><SkipBack className="h-[6px] w-[6px]" fill="currentColor" /></button>
            <button aria-label="Go to end" className="flex w-[14px] items-center justify-center"><SkipForward className="h-[6px] w-[6px]" fill="currentColor" /></button>
          </span>
          <span className="ml-[2px] flex h-[12px] overflow-hidden rounded-full bg-[#3f3f3f]">
            <button aria-label="Stop" className="flex w-[16px] items-center justify-center"><i className="h-[5px] w-[5px] bg-[#888]" /></button>
            <button aria-label="Play" className="flex w-[19px] items-center justify-center bg-[#8b9796]"><svg viewBox="0 0 6 6" className="h-[6px] w-[6px]"><path d="M0 0l6 3-6 3z" fill="#111" /></svg></button>
            <button aria-label="Pause" className="flex w-[16px] items-center justify-center gap-px bg-[#aab4b3]"><i className="h-[6px] w-[2px] bg-[#222]" /><i className="h-[6px] w-[2px] bg-[#222]" /></button>
          </span>
          <button aria-label="Record" className="ml-[2px] flex h-[12px] w-[12px] items-center justify-center rounded-full border border-[#2a1c18] bg-[#7c4a40]"><i className="h-[6px] w-[6px] rounded-full border border-[#d8bcb4]" /></button>
          <button aria-label="Repeat" className="ml-[2px] flex h-[12px] w-[12px] items-center justify-center rounded-full bg-[#6cc4c8]"><RotateCw className="h-[8px] w-[8px] text-white" strokeWidth={3} /></button>
          <svg viewBox="0 0 7 6" className="ml-[4px] h-[6px] w-[7px]"><path d="M0 5l2-1 1.500-3L5 4l2 1" fill="none" stroke="#2fa860" /></svg>
          <span className="ml-[2px] text-[4px]">GLOBAL</span>
          <span className="ml-[3px] text-[5px] text-[#2fa860]">read</span>
          <button aria-label="Automation menu" className="ml-[6px] flex h-[6px] w-[6px] items-center justify-center rounded-full border border-[#777]"><i className="h-[2px] w-[2px] bg-[#999]" /></button>
        </div>
        <div className="flex flex-1 justify-end gap-[11px] pr-[7px] text-[6px]">
          <span>Selection:</span><span>0.1.00</span><span>324.1.00</span><span>324.0.00</span>
        </div>
      </header>

      <div className="flex h-[18px] shrink-0 items-center gap-[2px] bg-[#303030] pl-[4px] pr-[5px]">
        {TOP.map((b) => <ToolButton key={b.n} b={b} />)}
      </div>

      <div className="flex min-h-0 flex-1">
        <div className="flex w-[193px] shrink-0 flex-col border-r border-[#5a2a2a]">
          <div className="flex h-[35px] shrink-0 flex-col gap-px pl-[2px] pr-[4px] pt-[2px]">
            <div className="flex gap-[2px]">{LEFT.map((b) => <ToolButton key={b.n} b={b} />)}</div>
            <div className="grid grid-cols-12 gap-[2px]">
              <button aria-label="Group" className="flex h-[15px] items-center justify-center bg-[#262626]"><G><path d="M1 2h7v5H1zM5 5h7v7H5z" {...stroke} /></G></button>
              <button aria-label="Delete" className="flex h-[15px] items-center justify-center bg-[#262626]"><Trash2 className={LI} /></button>
              {DOCKS.map((d) => (
                <button key={d} className="col-span-2 flex h-[15px] flex-col items-center justify-center bg-[#262626] text-[6px] leading-[6px] text-[#929292]">
                  {d.split(" ").map((w) => <span key={w}>{w}</span>)}
                </button>
              ))}
            </div>
          </div>
          <ul className="mt-[2px] min-h-0 flex-1 overflow-hidden border-b border-[#666]">
            {TRACKS.map((t) => <TrackRow key={t.n} t={t} />)}
          </ul>
          <div className="h-[10px] shrink-0" />
        </div>

        <main className="flex min-w-0 flex-1 flex-col">
          <Ruler />
          <div className="flex min-h-0 flex-1">
            <div className="min-w-0 flex-1"><Arrange /></div>
            <div className="flex w-[10px] flex-col items-center bg-[#2a2a2a] py-[3px] text-[7px] leading-[9px] text-[#888]">
              <i className="h-[5px] w-[5px] rounded-full border border-[#111] bg-[#444]" />
              <i className="mt-[4px] h-[318px] w-[5px] rounded-full bg-[#4c4c4c]" />
              <i className="mb-[2px] mt-auto h-[5px] w-[5px] rounded-full border border-[#111] bg-[#444]" />
              <button aria-label="Zoom in vertically">+</button><button aria-label="Zoom out vertically">−</button>
            </div>
          </div>
          <div className="flex h-[10px] shrink-0 items-center gap-[4px] bg-[#2a2a2a] pl-[2px] pr-[9px] text-[7px] leading-[9px] text-[#888]">
            <i className="h-[5px] w-[5px] rounded-full border border-[#111] bg-[#444]" />
            <span className="flex h-[5px] w-[492px] items-center justify-between rounded-full bg-[#4c4c4c] px-px"><i className="h-[2px] w-[2px] rounded-full bg-black" /><i className="h-[4px] w-px bg-black" /><i className="h-[2px] w-[2px] rounded-full bg-black" /></span>
            <i className="ml-auto h-[5px] w-[5px] rounded-full border border-[#111] bg-[#444]" />
            <button aria-label="Zoom in">+</button><button aria-label="Zoom out">−</button>
          </div>
        </main>
        <Master />
      </div>
    </div>
  );
}
